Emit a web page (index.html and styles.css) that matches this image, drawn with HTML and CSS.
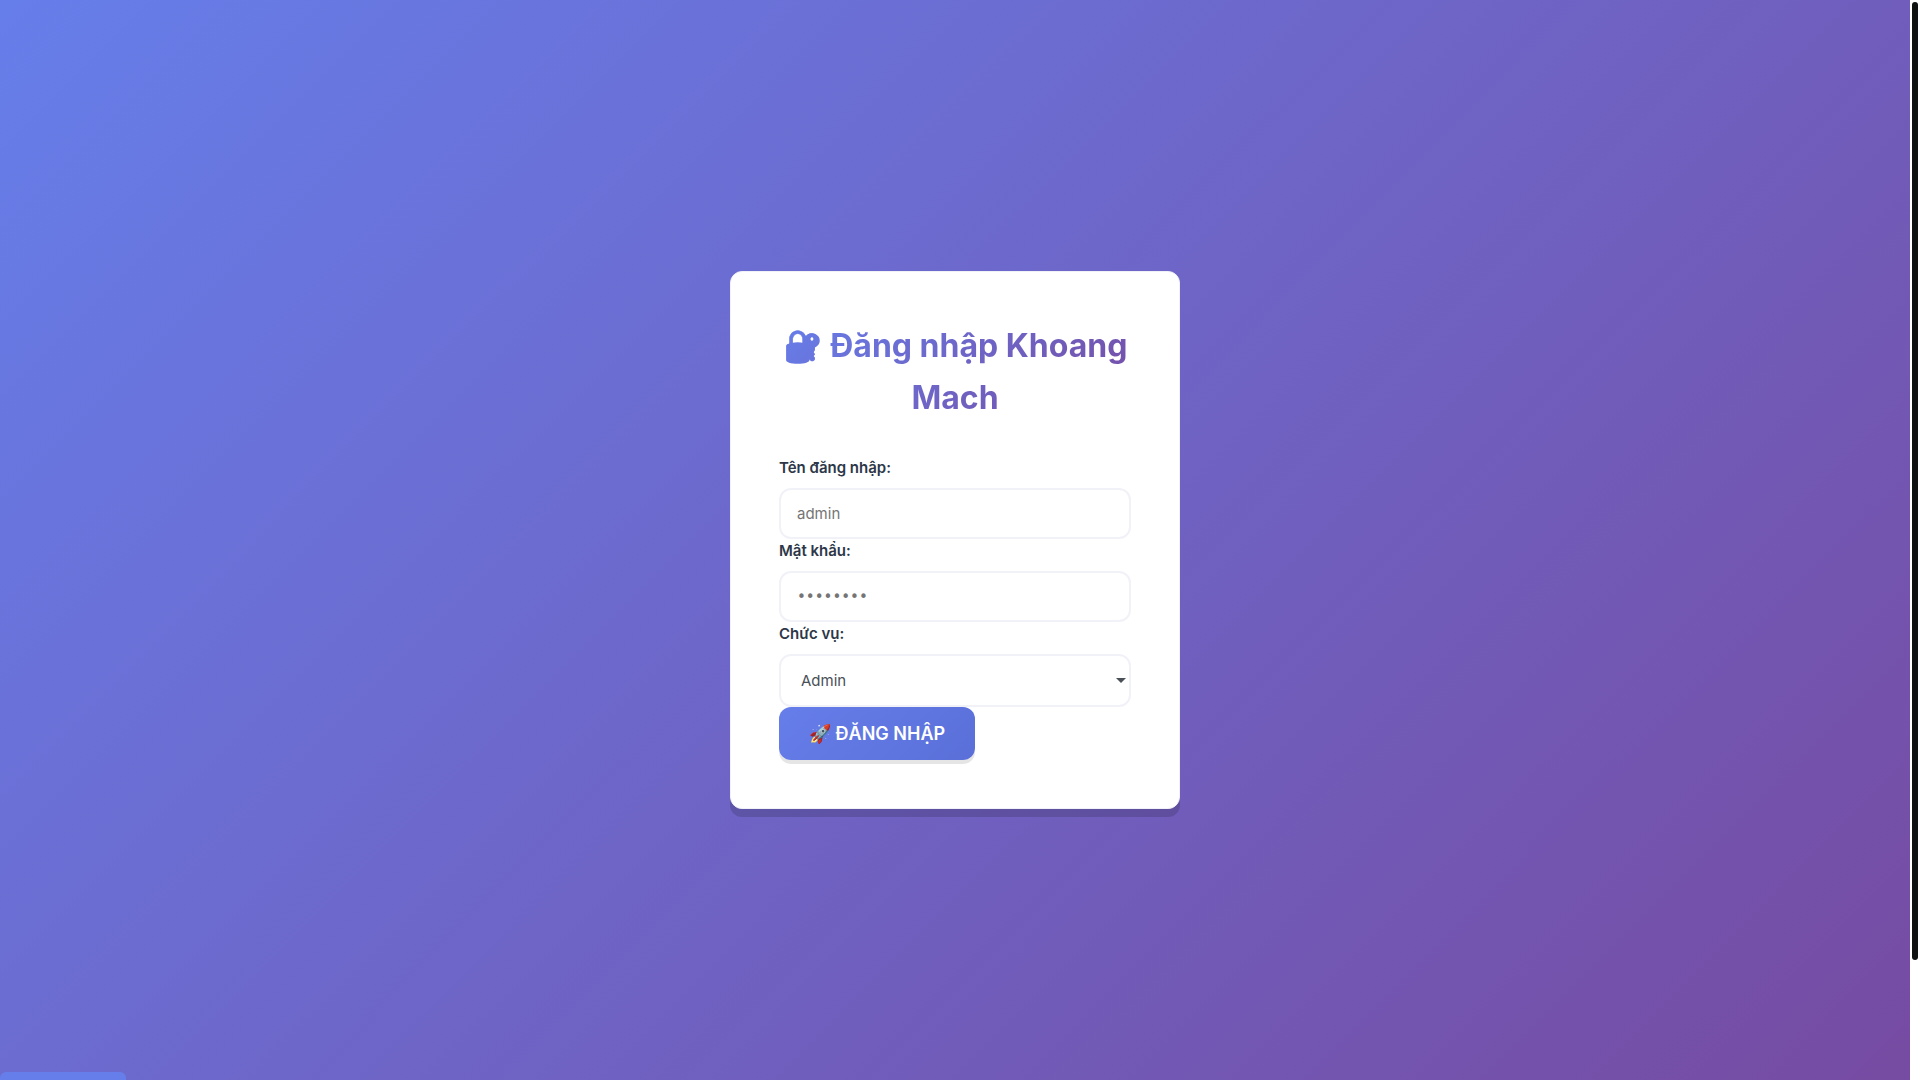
FILE: index.html
```
<!DOCTYPE html>
<html lang="vi">
<head>
  <meta charset="UTF-8">
  <meta name="viewport" content="width=device-width, initial-scale=1.0">
  <title>Đăng nhập Khoang Mach</title>
  <link rel="stylesheet" href="styles.css">
</head>
<body>
  <main class="login-page">
    <div class="login-card">
      <h1>🔐 Đăng nhập Khoang Mach</h1>
      <form>
        <label for="username">Tên đăng nhập:</label>
        <input type="text" id="username" placeholder="admin">

        <label for="password">Mật khẩu:</label>
        <input type="password" id="password" placeholder="••••••••">

        <label for="role">Chức vụ:</label>
        <select id="role">
          <option>Admin</option>
        </select>

        <button type="submit" class="btn">🚀 ĐĂNG NHẬP</button>
      </form>
    </div>
    <div class="bottom-tab"></div>
  </main>
  <div class="scrollbar">
    <div class="scrollbar-thumb"></div>
  </div>
</body>
</html>
```

FILE: styles.css
```
* {
  box-sizing: border-box;
}
body {
  display: flex;
  height: 100vh;
  margin: 0;
  font-family: Inter, "Noto Sans", sans-serif;
  font-size: 16px;
  line-height: 1.6;
  color: #2d3748;
  overflow: hidden;
}

.login-page {
  position: relative;
  flex: 1;
  display: flex;
  align-items: center;
  justify-content: center;
  background: linear-gradient(135deg, #667eea 0%, #764ba2 100%);
  overflow: hidden;
}
.login-card {
  width: 100%;
  max-width: 450px;
  padding: 48px;
  background: #fff;
  border: 1px solid #f1f1f8;
  border-radius: 12px;
  box-shadow: 0 8px 0 rgba(0, 0, 0, 0.15);
}
h1 {
  margin: 0 0 32px;
  font-size: 32px;
  line-height: 52px;
  font-weight: 700;
  text-align: center;
  background: linear-gradient(135deg, #667eea 0%, #764ba2 100%);
  -webkit-background-clip: text;
  background-clip: text;
  -webkit-text-fill-color: transparent;
}

label {
  display: block;
  margin-bottom: 8px;
  font-size: 15px;
  font-weight: 600;
}
input,
select {
  display: block;
  width: 100%;
  padding: 14px 16px;
  font-family: inherit;
  font-size: 15px;
  color: #495057;
  background: #fff;
  border: 2px solid #f1f1f8;
  border-radius: 12px;
}
input[type="password"]::placeholder {
  font-family: "DejaVu Sans", sans-serif;
}
select {
  appearance: none;
  padding: 15px 20px;
  background: #fff url("data:image/svg+xml,%3Csvg xmlns='http://www.w3.org/2000/svg' width='10' height='5'%3E%3Cpath d='M0 0h10L5 5z' fill='%23495057'/%3E%3C/svg%3E") no-repeat right 3px center;
}
.btn {
  display: block;
  padding: 16px 30px;
  font-family: inherit;
  font-size: 18px;
  font-weight: 600;
  color: #fff;
  background: linear-gradient(135deg, #667eea 0%, #5a6fd8 100%);
  border: none;
  border-radius: 12px;
  box-shadow: 0 4px 0 rgba(0, 0, 0, 0.1);
  cursor: pointer;
}

/* tab peeking out at the bottom edge */
.bottom-tab {
  position: absolute;
  bottom: 0;
  left: 0;
  width: 126px;
  height: 8px;
  background: #667eea;
  border-radius: 6px 6px 0 0;
}

/* scrollbar */
.scrollbar {
  width: 10px;
  padding: 2px;
  background: #fff;
}
.scrollbar-thumb {
  height: 89%;
  background: #0f1111;
  border-radius: 3px;
}
```
